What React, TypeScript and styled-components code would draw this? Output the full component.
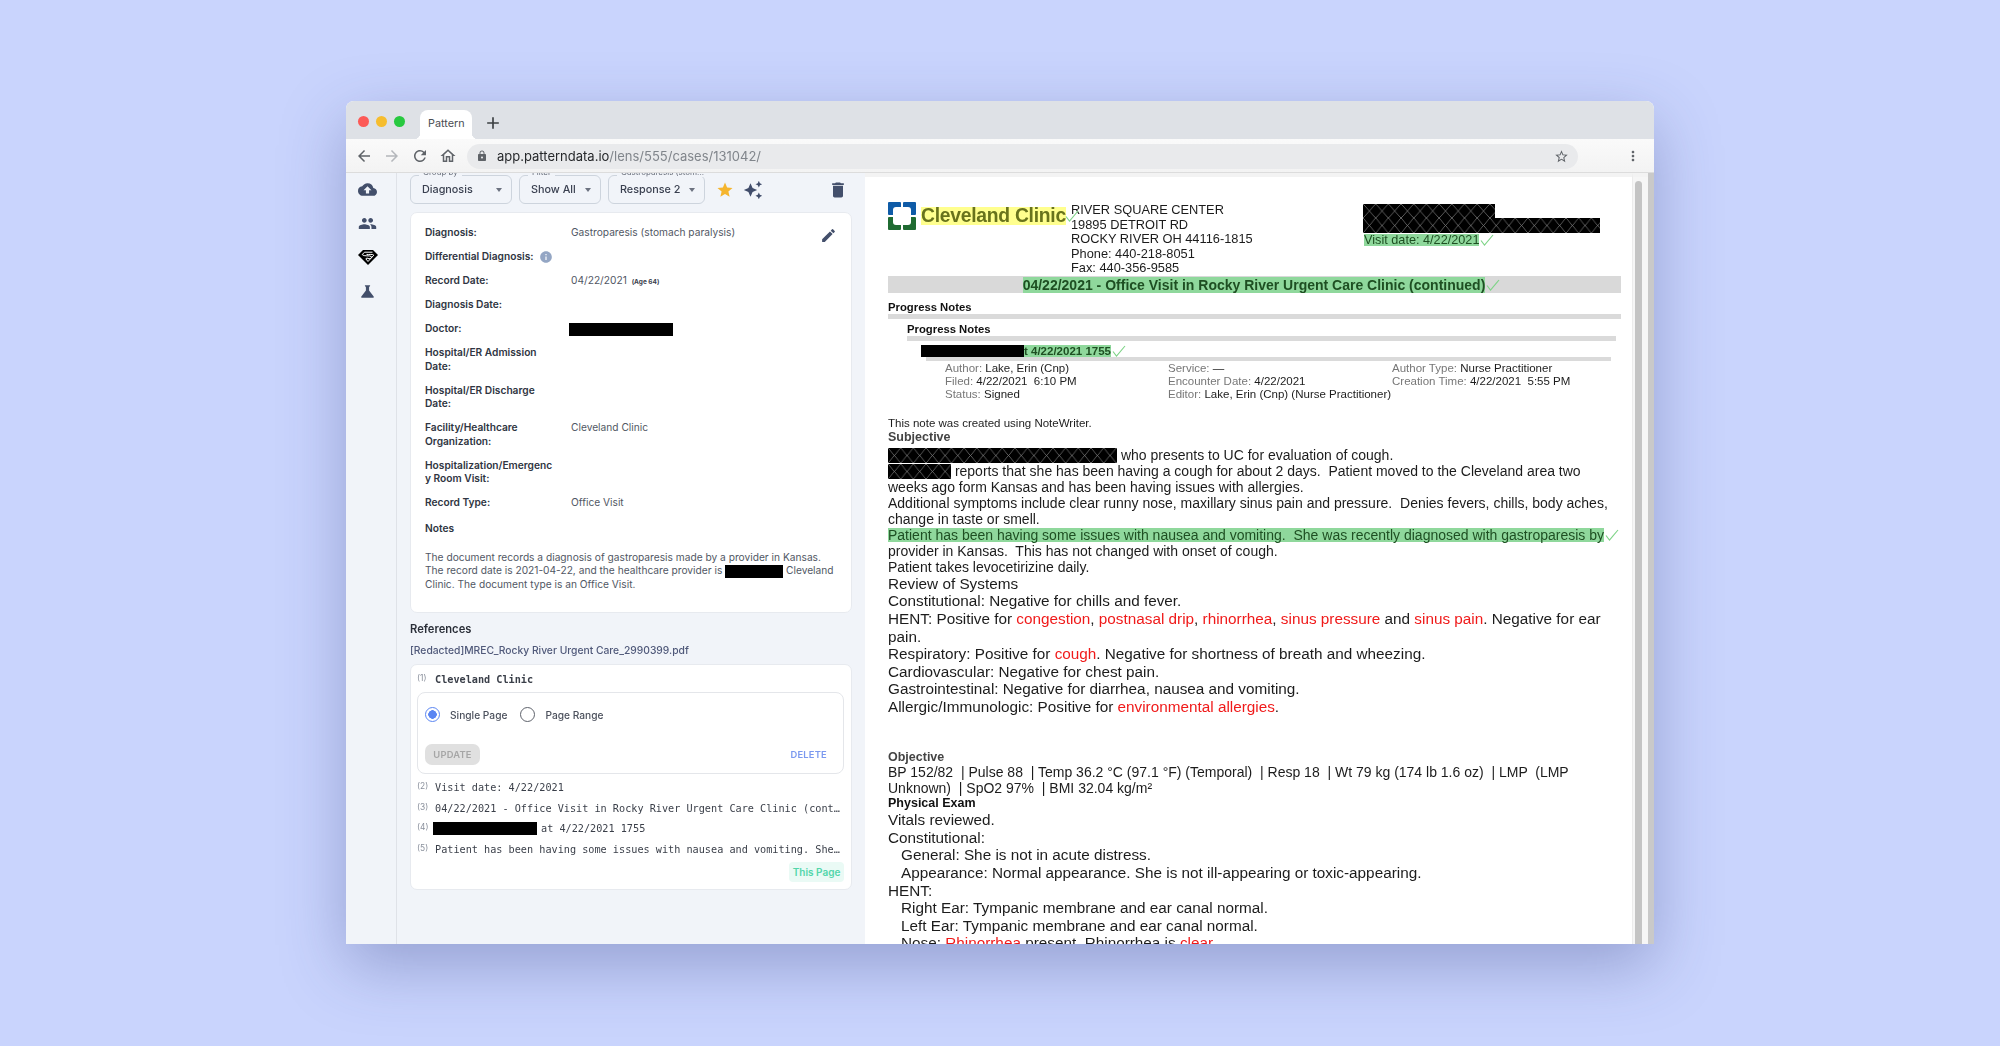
import React from "react";
import styled, { createGlobalStyle } from "styled-components";
import {
  MdAdd, MdArrowBack, MdArrowForward, MdAutoAwesome, MdCloudUpload, MdDelete, MdEdit, MdInfo,
  MdLock, MdMoreVert, MdOutlineHome, MdPeople, MdRefresh, MdScience, MdStar, MdStarBorder,
} from "react-icons/md";

const Global = createGlobalStyle`
  html, body { margin: 0; padding: 0; height: 100%; overflow: hidden; }
  body { background: #c9d4fd; font-family: Inter, "Liberation Sans", sans-serif; }
  * { box-sizing: border-box; }
`;

const Page = styled.div`
  width: 2000px; height: 1046px; padding: 101px 346px 102px 346px;
  background: #c9d4fd; overflow: hidden;
`;
const Win = styled.div`
  height: 843px; display: flex; flex-direction: column; overflow: hidden;
  border-radius: 8px 8px 0 0; background: #fff;
  box-shadow: 0 22px 64px rgba(50, 62, 130, 0.34);
  filter: blur(0.35px);
`;
const TabBar = styled.div`
  height: 38px; flex: none; background: #dee1e6; display: flex; align-items: flex-end; padding-left: 12px;
`;
const Lights = styled.div`
  display: flex; gap: 7.2px; align-self: center; margin-top: 2px; margin-right: 15px;
`;
const Light = styled.span<{ $c: string }>`
  width: 11px; height: 11px; border-radius: 50%; background: ${(p) => p.$c};
`;
const Tab = styled.div`
  position: relative; width: 52px; height: 29px; background: #fff; border-radius: 8px 8px 0 0;
  font-size: 10.8px; color: #4a4d52; display: flex; align-items: center; justify-content: center;
  padding-bottom: 3px;
  &::before, &::after { content: ""; position: absolute; bottom: 0; width: 6px; height: 6px; }
  &::before { left: -6px; background: radial-gradient(circle at 0 0, transparent 6px, #fff 6.5px); }
  &::after { right: -6px; background: radial-gradient(circle at 100% 0, transparent 6px, #fff 6.5px); }
`;
const NewTab = styled.div`
  margin-left: 11px; height: 32px; display: flex; align-items: center; color: #3c4043; font-size: 20px;
`;
const Toolbar = styled.div`
  height: 34px; flex: none; display: flex; align-items: center; padding: 1px 13px 0 4px;
  background: linear-gradient(#fafafa, #f3f3f3); border-bottom: 1px solid #dcdcdc; color: #5f6368;
`;
const NavBtn = styled.span<{ $muted?: boolean }>`
  width: 28px; display: flex; justify-content: center; align-items: center;
  color: ${(p) => (p.$muted ? "#b4b7bb" : "#5f6368")}; font-size: 18px;
`;
const MenuBtn = styled.span`
  width: 16px; margin-left: auto; display: flex; justify-content: center; color: #5f6368; font-size: 18px;
`;
const Omni = styled.div`
  margin-left: 5px; width: 1111px; flex: none; height: 25px; border-radius: 13px; background: #e9eaec;
  display: flex; align-items: center; padding: 0 9px; font-size: 13px; color: #80858b;
`;
const Host = styled.span`color: #26282b;`;
const Url = styled.span`margin-left: 9px; flex: 1;`;
const Main = styled.div`flex: 1; display: flex; min-height: 0;`;
const Rail = styled.nav`
  width: 51px; flex: none; background: #f1f4f9; border-right: 1px solid #dfe2e8;
  display: flex; flex-direction: column; align-items: center; padding: 6px 7px 0 0; gap: 13px; color: #434f6b;
`;
const RailIcon = styled.span`
  height: 21px; display: flex; align-items: center; justify-content: center; font-size: 19px;
`;
const Panel = styled.section`
  width: 468px; flex: none; background: #f1f4f9; padding: 2px 13px 0 13px; overflow: hidden;
`;
const Controls = styled.div`display: flex; align-items: center; height: 29px;`;
const SelectBox = styled.div<{ $w: number }>`
  position: relative; width: ${(p) => p.$w}px; height: 29px; margin-right: 7px;
  border: 1px solid #cdd4dd; border-radius: 6px; display: flex; align-items: center;
  justify-content: space-between; padding: 0 9px 0 11px;
  font-size: 10.8px; font-weight: 500; color: #3a4050;
  &::after { content: ""; border: 3.5px solid transparent; border-top: 4px solid #6c7280; border-bottom: 0; }
`;
const Legend = styled.span`
  position: absolute; left: 8px; top: -8px; padding: 0 4px; background: #f1f4f9;
  font-size: 8px; line-height: 9px; font-weight: 400; color: #666c78; white-space: nowrap;
`;
const CtlIcon = styled.span<{ $c: string; $ml: number; $s: number }>`
  display: flex; color: ${(p) => p.$c}; margin-left: ${(p) => p.$ml}px; font-size: ${(p) => p.$s}px;
`;
const Card = styled.div`
  position: relative; margin-top: 8px; background: #fff; border: 1px solid #e7eaef; border-radius: 7px;
  padding: 13px 12px 20px 14px;
`;
const Fields = styled.div`
  display: grid; grid-template-columns: 146px 1fr; row-gap: 10.5px; font-size: 10.2px; line-height: 13.5px;
`;
const FieldLabel = styled.div`
  font-weight: 600; color: #2f3542; display: flex; align-items: center; gap: 5px;
  svg { margin: -1px 0; }
`;
const FieldValue = styled.div`color: #515764;`;
const Age = styled.small`font-size: 6.5px; line-height: 0; font-weight: 700; color: #3a404c; margin-left: 2px;`;
const Redact = styled.span<{ $w: number; $h?: number }>`
  display: inline-block; vertical-align: middle; flex: none; width: ${(p) => p.$w}px; height: ${(p) => p.$h ?? 13}px;
  background: #000; margin: -2px 0;
`;
const DoctorRedact = styled(Redact)`margin-left: -2px;`;
const RowRedact = styled(Redact)`margin: 0 -2px;`;
const EditBtn = styled.span`
  position: absolute; right: 14px; top: 14px; display: flex; color: #434f6b; font-size: 17px;
`;
const NotesTitle = styled.div`
  margin-top: 11px; font-size: 10.2px; line-height: 14px; font-weight: 600; color: #2f3542;
`;
const NotesBody = styled.p`
  margin: 16px 0 0; font-size: 10.2px; line-height: 13.7px; color: #515764; white-space: nowrap;
`;
const RefTitle = styled.h3`
  margin: 9px 0 0; font-size: 11.2px; line-height: 14px; font-weight: 600; color: #2a2e38;
`;
const RefLink = styled.a`
  display: block; margin-top: 7px; font-size: 10.3px; line-height: 14px; font-weight: 500; color: #50597a;
`;
const RefCard = styled.div`
  margin-top: 7px; height: 226px; background: #fff; border: 1px solid #e7eaef; border-radius: 7px;
  padding: 4px 7px 0 6px;
`;
const RefRow = styled.div<{ $h?: number }>`
  display: flex; align-items: center; height: ${(p) => p.$h ?? 20.5}px; gap: 6px;
  font-family: "DejaVu Sans Mono", monospace; font-size: 10.2px; color: #3a3f49;
  white-space: nowrap; overflow: hidden;
`;
const Marker = styled.span`
  flex: none; font-family: Inter, sans-serif; font-size: 8.4px; color: #8a909c; width: 12px; margin-bottom: 3px;
`;
const RefText = styled.span<{ $bold?: boolean }>`
  overflow: hidden; text-overflow: ellipsis; font-weight: ${(p) => (p.$bold ? 700 : 400)};
`;
const Editor = styled.div`
  margin: 2px 0 4px; height: 82px; border: 1px solid #e4e6ea; border-radius: 8px; padding: 14px 7px 0;
`;
const RadioRow = styled.div`
  display: flex; align-items: center; font-size: 10.2px; font-weight: 500; color: #4b505c; height: 16px;
`;
const Radio = styled.span<{ $on?: boolean }>`
  width: 15px; height: 15px; border-radius: 50%; flex: none; margin-right: 10px;
  border: 1.5px solid ${(p) => (p.$on ? "#5b86f2" : "#5e626b")};
  background: ${(p) => (p.$on ? "radial-gradient(circle, #5b86f2 4px, #fff 4.5px)" : "#fff")};
`;
const RadioText = styled.span`margin-right: 13px;`;
const EditorActions = styled.div`
  margin-top: 21px; display: flex; align-items: center; justify-content: space-between; padding-right: 9px;
`;
const UpdateBtn = styled.span`
  width: 55px; height: 21px; border-radius: 7px; background: #e0e0e0; color: #a6a6a6;
  font-size: 9.4px; font-weight: 600; letter-spacing: 0.2px; display: flex; align-items: center; justify-content: center;
`;
const DeleteBtn = styled.span`
  font-size: 9.4px; font-weight: 600; letter-spacing: 0.2px; color: #7b99ef;
`;
const ChipRow = styled.div`display: flex; justify-content: flex-end; margin-top: 2px;`;
const Chip = styled.span`
  height: 20px; width: 55px; background: #eafaf5; border-radius: 4px; color: #52d6aa;
  font-size: 10px; font-weight: 600; display: flex; align-items: center; justify-content: center;
`;
const Doc = styled.article`
  flex: 1; min-width: 0; background: #fff; border-top: 4px solid #f3f3f3; padding: 25px 11px 0 23px;
  overflow: hidden; font-family: "Liberation Sans", Arial, sans-serif; color: #1c1c1c;
`;
const LetterHead = styled.header`display: flex; align-items: flex-start; height: 74px;`;
const Logo = styled.svg`flex: none; width: 28px; height: 28px;`;
const Brand = styled.span`
  position: relative; margin: 5px 0 0 5px; width: 145px; height: 18px; flex: none; background: #ffff8e; color: #68731c;
  font-size: 19.3px; line-height: 18px; font-weight: 700; white-space: nowrap; letter-spacing: -0.25px;
`;
const Address = styled.div`
  margin-left: 5px; width: 292px; flex: none; font-size: 12.8px; line-height: 14.5px; padding-top: 1px;
`;
const RedactBlock = styled.div`display: flex; flex-direction: column; align-items: flex-start; margin-top: 2px;`;
const Hatched = styled.span<{ $w: number; $h?: number }>`
  display: block; flex: none; width: ${(p) => p.$w}px; height: ${(p) => p.$h ?? 15}px;
  background-color: #000; background-size: 12.7px 100%;
  background-image:
    linear-gradient(to top right, transparent calc(50% - 0.6px), #6e6e6e 50%, transparent calc(50% + 0.6px)),
    linear-gradient(to bottom right, transparent calc(50% - 0.6px), #6e6e6e 50%, transparent calc(50% + 0.6px));
`;
const Mark = styled.span`background: #8fd89c; color: #1e4f22;`;
const HlMark = styled(Mark)`line-height: 14px; height: 14px;`;
const VisitLine = styled.div`
  display: flex; align-items: center; margin-top: 1px; font-size: 12.7px; line-height: 12px; padding-left: 1px;
`;
const CheckSvg = styled.svg`flex: none; width: 14px; height: 12px; margin-left: 1px;`;
const BrandCheck = styled(CheckSvg)`position: absolute; right: -13px; top: 3px; margin: 0;`;
const TitleBar = styled.div`
  height: 17px; background: #d9d9d9; display: flex; justify-content: center; align-items: center;
  font-size: 14px; font-weight: 700; padding-left: 14px; white-space: nowrap;
`;
const SectionHead = styled.div<{ $ml?: number; $mt: number }>`
  margin: ${(p) => p.$mt}px 0 0 ${(p) => p.$ml ?? 0}px; font-size: 11.3px; line-height: 13px; font-weight: 700; color: #111;
`;
const Rule = styled.div<{ $ml?: number; $mr?: number; $h?: number }>`
  height: ${(p) => p.$h ?? 5}px; background: #dadada; margin: 0 ${(p) => p.$mr ?? 0}px 0 ${(p) => p.$ml ?? 0}px;
`;
const Stamp = styled.div`
  margin: 4px 0 0 33px; display: flex; align-items: center; font-size: 11.5px; font-weight: 700; height: 12px; white-space: nowrap;
`;
const Meta = styled.div`
  margin-left: 57px; display: grid; grid-template-columns: 223px 224px 1fr; font-size: 11.5px; line-height: 13px; margin-top: 1px; white-space: pre;
`;
const MetaKey = styled.span`color: #777;`;
const Remark = styled.div`margin-top: 15px; font-size: 11.5px; line-height: 14px;`;
const Heading = styled.div<{ $mt?: number; $mb?: number; $c: string }>`
  margin: ${(p) => p.$mt ?? 0}px 0 ${(p) => p.$mb ?? 0}px; font-size: 12.5px; line-height: 14px; font-weight: 700;
  color: ${(p) => p.$c};
`;
const Line = styled.div`
  display: flex; align-items: center; white-space: pre; font-size: 14px; height: 16px;
`;
const BigLine = styled.div<{ $in?: boolean }>`
  display: flex; align-items: center; white-space: pre; font-size: 15.3px;
  height: 17.6px; padding-left: ${(p) => (p.$in ? 13 : 0)}px;
`;
const Red = styled.span`color: #f01a1a;`;
const Vitals = styled.div`font-size: 14px; line-height: 16.3px; white-space: pre;`;
const ScrollTrack = styled.div`
  width: 16px; flex: none; background: #f6f6f6; border-top: 4px solid #f3f3f3; padding: 4px 6px 0 2px;
  border-left: 1px solid #ececec;
`;
const Thumb = styled.div`height: 100%; border-radius: 4px 4px 0 0; background: #c4c4c4;`;
const Edge = styled.div`width: 6px; flex: none; background: #c9c9c9;`;

const CheckPath = () => <path d="M1 6.5L4.5 11L13 1" fill="none" stroke="#7fd488" strokeWidth="1.15" />;
const Check = () => <CheckSvg viewBox="0 0 14 12"><CheckPath /></CheckSvg>;

const fields: [React.ReactNode, React.ReactNode][] = [
  ["Diagnosis:", "Gastroparesis (stomach paralysis)"],
  [<>Differential Diagnosis: <MdInfo size={14} color="#94a6c4" /></>, ""],
  ["Record Date:", <>04/22/2021 <Age>(Age 64)</Age></>],
  ["Diagnosis Date:", ""],
  ["Doctor:", <DoctorRedact $w={104} />],
  [<span>Hospital/ER Admission<br />Date:</span>, ""],
  [<span>Hospital/ER Discharge<br />Date:</span>, ""],
  [<span>Facility/Healthcare<br />Organization:</span>, "Cleveland Clinic"],
  [<span>Hospitalization/Emergenc<br />y Room Visit:</span>, ""],
  ["Record Type:", "Office Visit"],
];

export default function App() {
  return (
    <Page>
      <Global />
      <Win>
        <TabBar>
          <Lights>
            <Light $c="#fc5a57" /><Light $c="#f6bd2e" /><Light $c="#28c940" />
          </Lights>
          <Tab>Pattern</Tab>
          <NewTab><MdAdd /></NewTab>
        </TabBar>
        <Toolbar>
          <NavBtn><MdArrowBack /></NavBtn>
          <NavBtn $muted><MdArrowForward /></NavBtn>
          <NavBtn><MdRefresh /></NavBtn>
          <NavBtn><MdOutlineHome /></NavBtn>
          <Omni>
            <MdLock size={12} color="#5f6368" />
            <Url><Host>app.patterndata.io</Host>/lens/555/cases/131042/</Url>
            <MdStarBorder size={15} color="#5f6368" />
          </Omni>
          <MenuBtn><MdMoreVert /></MenuBtn>
        </Toolbar>
        <Main>
          <Rail>
            <RailIcon><MdCloudUpload /></RailIcon>
            <RailIcon><MdPeople /></RailIcon>
            <RailIcon>
              <svg width="20" height="15" viewBox="0 0 20 15">
                <path d="M5 0H15L20 5L10 15L0 5Z" fill="#000" />
                <path d="M14.5 2.2H6.5L4.2 4.6C6 6.8 11.5 5 13.4 6.6C14.2 7.4 13 8.6 11 8.8L9 8L7.8 8.8L10 11.5L15.8 5.2C15 3.8 11 4.8 8.5 4.4" fill="none" stroke="#fff" strokeWidth="1" />
              </svg>
            </RailIcon>
            <RailIcon><MdScience /></RailIcon>
          </Rail>
          <Panel>
            <Controls>
              <SelectBox $w={102}><Legend>Group by</Legend>Diagnosis</SelectBox>
              <SelectBox $w={82}><Legend>Filter</Legend>Show All</SelectBox>
              <SelectBox $w={97}><Legend>Gastroparesis (stom...</Legend>Response 2</SelectBox>
              <CtlIcon $c="#f5b52e" $ml={4} $s={18}><MdStar /></CtlIcon>
              <CtlIcon $c="#414d6b" $ml={9} $s={20}><MdAutoAwesome /></CtlIcon>
              <CtlIcon $c="#434f6b" $ml={65} $s={20}><MdDelete /></CtlIcon>
            </Controls>
            <Card>
              <EditBtn><MdEdit /></EditBtn>
              <Fields>
                {fields.map(([k, v], i) => (
                  <React.Fragment key={i}>
                    <FieldLabel>{k}</FieldLabel>
                    <FieldValue>{v}</FieldValue>
                  </React.Fragment>
                ))}
              </Fields>
              <NotesTitle>Notes</NotesTitle>
              <NotesBody>
                The document records a diagnosis of gastroparesis made by a provider in Kansas.<br />
                The record date is 2021-04-22, and the healthcare provider is <Redact $w={58} /> Cleveland<br />
                Clinic. The document type is an Office Visit.
              </NotesBody>
            </Card>
            <RefTitle>References</RefTitle>
            <RefLink>[Redacted]MREC_Rocky River Urgent Care_2990399.pdf</RefLink>
            <RefCard>
              <RefRow $h={21}><Marker>(1)</Marker><RefText $bold>Cleveland Clinic</RefText></RefRow>
              <Editor>
                <RadioRow>
                  <Radio $on /><RadioText>Single Page</RadioText>
                  <Radio /><RadioText>Page Range</RadioText>
                </RadioRow>
                <EditorActions>
                  <UpdateBtn>UPDATE</UpdateBtn>
                  <DeleteBtn>DELETE</DeleteBtn>
                </EditorActions>
              </Editor>
              <RefRow><Marker>(2)</Marker><RefText>Visit date: 4/22/2021</RefText></RefRow>
              <RefRow><Marker>(3)</Marker><RefText>04/22/2021 - Office Visit in Rocky River Urgent Care Clinic (continued)</RefText></RefRow>
              <RefRow><Marker>(4)</Marker><RowRedact $w={104} /><RefText>at 4/22/2021 1755</RefText></RefRow>
              <RefRow><Marker>(5)</Marker><RefText>Patient has been having some issues with nausea and vomiting. She was recently diagnosed</RefText></RefRow>
              <ChipRow><Chip>This Page</Chip></ChipRow>
            </RefCard>
          </Panel>
          <Doc>
            <LetterHead>
              <Logo viewBox="0 0 28 28">
                <rect x="0" y="0" width="13" height="13" rx="1" fill="#0f5ba7" />
                <rect x="15" y="0" width="13" height="13" rx="1" fill="#0f5ba7" />
                <rect x="0" y="15" width="13" height="13" rx="1" fill="#1f6b32" />
                <rect x="15" y="15" width="13" height="13" rx="1" fill="#1f6b32" />
                <rect x="5" y="5" width="18" height="18" rx="3" fill="#fff" />
              </Logo>
              <Brand>Cleveland Clinic<BrandCheck viewBox="0 0 14 12"><CheckPath /></BrandCheck></Brand>
              <Address>
                RIVER SQUARE CENTER<br />19895 DETROIT RD<br />ROCKY RIVER OH 44116-1815<br />Phone: 440-218-8051<br />Fax: 440-356-9585
              </Address>
              <RedactBlock>
                <Hatched $w={132} $h={14} />
                <Hatched $w={237} />
                <VisitLine><Mark>Visit date: 4/22/2021</Mark><Check /></VisitLine>
              </RedactBlock>
            </LetterHead>
            <TitleBar><Mark>04/22/2021 - Office Visit in Rocky River Urgent Care Clinic (continued)</Mark><Check /></TitleBar>
            <SectionHead $mt={8}>Progress Notes</SectionHead>
            <Rule />
            <SectionHead $mt={4} $ml={19}>Progress Notes</SectionHead>
            <Rule $ml={19} $mr={5} />
            <Stamp><Redact $w={103} $h={12} /><Mark>t 4/22/2021 1755</Mark><Check /></Stamp>
            <Rule $ml={38} $mr={10} $h={4} />
            <Meta>
              <span><MetaKey>Author:</MetaKey> Lake, Erin (Cnp)</span>
              <span><MetaKey>Service:</MetaKey> —</span>
              <span><MetaKey>Author Type:</MetaKey> Nurse Practitioner</span>
              <span><MetaKey>Filed:</MetaKey> 4/22/2021  6:10 PM</span>
              <span><MetaKey>Encounter Date:</MetaKey> 4/22/2021</span>
              <span><MetaKey>Creation Time:</MetaKey> 4/22/2021  5:55 PM</span>
              <span><MetaKey>Status:</MetaKey> Signed</span>
              <span><MetaKey>Editor:</MetaKey> Lake, Erin (Cnp) (Nurse Practitioner)</span>
            </Meta>
            <Remark>This note was created using NoteWriter.</Remark>
            <Heading $c="#444" $mb={3}>Subjective</Heading>
            <Line><Hatched $w={229} /> who presents to UC for evaluation of cough.</Line>
            <Line><Hatched $w={63} /> reports that she has been having a cough for about 2 days.  Patient moved to the Cleveland area two</Line>
            <Line>weeks ago form Kansas and has been having issues with allergies.</Line>
            <Line>Additional symptoms include clear runny nose, maxillary sinus pain and pressure.  Denies fevers, chills, body aches,</Line>
            <Line>change in taste or smell.</Line>
            <Line><HlMark>Patient has been having some issues with nausea and vomiting.  She was recently diagnosed with gastroparesis by</HlMark><Check /></Line>
            <Line>provider in Kansas.  This has not changed with onset of cough.</Line>
            <Line>Patient takes levocetirizine daily.</Line>
            <BigLine>Review of Systems</BigLine>
            <BigLine>Constitutional: Negative for chills and fever.</BigLine>
            <BigLine>HENT: Positive for <Red>congestion</Red>, <Red>postnasal drip</Red>, <Red>rhinorrhea</Red>, <Red>sinus pressure</Red> and <Red>sinus pain</Red>. Negative for ear</BigLine>
            <BigLine>pain.</BigLine>
            <BigLine>Respiratory: Positive for <Red>cough</Red>. Negative for shortness of breath and wheezing.</BigLine>
            <BigLine>Cardiovascular: Negative for chest pain.</BigLine>
            <BigLine>Gastrointestinal: Negative for diarrhea, nausea and vomiting.</BigLine>
            <BigLine>Allergic/Immunologic: Positive for <Red>environmental allergies</Red>.</BigLine>
            <Heading $mt={34} $c="#444">Objective</Heading>
            <Vitals>{"BP 152/82  | Pulse 88  | Temp 36.2 °C (97.1 °F) (Temporal)  | Resp 18  | Wt 79 kg (174 lb 1.6 oz)  | LMP  (LMP\nUnknown)  | SpO2 97%  | BMI 32.04 kg/m²"}</Vitals>
            <Heading $c="#111" $mb={1}>Physical Exam</Heading>
            <BigLine>Vitals reviewed.</BigLine>
            <BigLine>Constitutional:</BigLine>
            <BigLine $in>General: She is not in acute distress.</BigLine>
            <BigLine $in>Appearance: Normal appearance. She is not ill-appearing or toxic-appearing.</BigLine>
            <BigLine>HENT:</BigLine>
            <BigLine $in>Right Ear: Tympanic membrane and ear canal normal.</BigLine>
            <BigLine $in>Left Ear: Tympanic membrane and ear canal normal.</BigLine>
            <BigLine $in>Nose: <Red>Rhinorrhea</Red> present. Rhinorrhea is <Red>clear</Red>.</BigLine>
          </Doc>
          <ScrollTrack><Thumb /></ScrollTrack>
          <Edge />
        </Main>
      </Win>
    </Page>
  );
}
